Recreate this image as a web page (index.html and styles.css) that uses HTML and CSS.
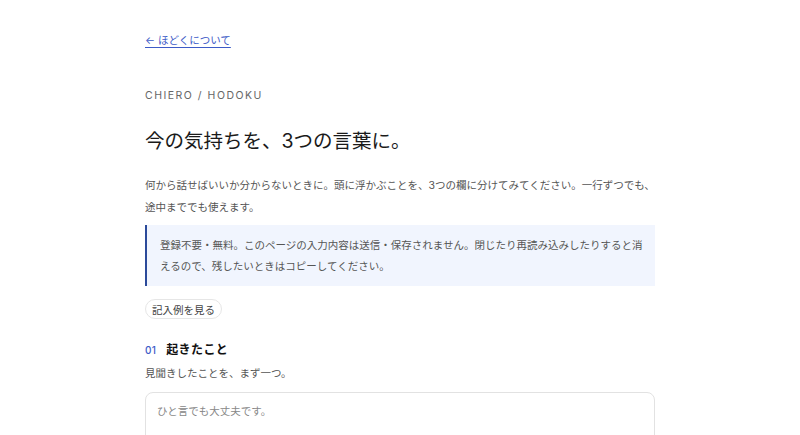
FILE: index.html
```html
<!DOCTYPE html>
<html lang="ja">
<head>
<meta charset="utf-8">
<title>今の気持ちを、3つの言葉に。</title>
<link rel="stylesheet" href="styles.css">
</head>
<body>
<main class="page">
  <a class="back" href="#">← ほどくについて</a>
  <p class="eyebrow">CHIERO / HODOKU</p>
  <h1 class="title">今の気持ちを、3つの言葉に。</h1>
  <p class="lead">何から話せばいいか分からないときに。頭に浮かぶことを、3つの欄に分けてみてください。一行ずつでも、途中まででも使えます。</p>
  <div class="notice">登録不要・無料。このページの入力内容は送信・保存されません。閉じたり再読み込みしたりすると消えるので、残したいときはコピーしてください。</div>
  <button class="example" type="button">記入例を見る</button>
  <section class="field">
    <h2 class="field-title"><span class="num">01</span>起きたこと</h2>
    <p class="field-hint">見聞きしたことを、まず一つ。</p>
    <textarea class="field-input" placeholder="ひと言でも大丈夫です。"></textarea>
  </section>
</main>
</body>
</html>
```
FILE: styles.css
```css
html, body {
  margin: 0;
  padding: 0;
  background: #ffffff;
}
body {
  font-family: "Inter", "Noto Sans CJK JP", sans-serif;
  color: #333;
}
.page {
  width: 510px;
  margin-left: 145px;
  padding-top: 33px;
  display: flex;
  flex-direction: column;
  align-items: flex-start;
}
.back {
  font-size: 10.5px;
  line-height: 16px;
  color: #3d5bc7;
  text-decoration: underline;
  text-underline-offset: 3px;
  text-decoration-thickness: 1px;
}
.eyebrow {
  margin: 39px 0 0;
  font-size: 10.5px;
  line-height: 16px;
  letter-spacing: 1.5px;
  color: #666;
}
.title {
  margin: 23px 0 0;
  font-size: 19.5px;
  line-height: 28px;
  font-weight: 400;
  color: #1a1a1a;
}
.lead {
  margin: 20px 0 0;
  font-size: 10.5px;
  line-height: 22px;
  color: #555;
}
.notice {
  box-sizing: border-box;
  width: 100%;
  margin-top: 6px;
  padding: 9.5px 8px 9.5px 13px;
  border-left: 2px solid #2b4a9a;
  background: #f1f5fe;
  font-size: 10.5px;
  line-height: 21px;
  color: #555;
  line-break: anywhere;
}
.example {
  margin-top: 13px;
  height: 20px;
  padding: 0 6px;
  border: 1px solid #e6e6e6;
  border-radius: 10px;
  background: #fff;
  font-family: inherit;
  font-size: 10.5px;
  color: #444;
}
.field {
  width: 100%;
  margin-top: 22px;
}
.field-title {
  margin: 0;
  font-size: 12px;
  line-height: 18px;
  font-weight: 700;
  color: #111;
  letter-spacing: 0.4px;
}
.num {
  font-size: 10px;
  font-weight: 500;
  color: #3d5bc7;
  margin-right: 10px;
  letter-spacing: 0.3px;
}
.field-hint {
  margin: 6px 0 0;
  font-size: 10.5px;
  line-height: 18px;
  color: #555;
}
.field-input {
  display: block;
  box-sizing: border-box;
  width: 100%;
  height: 90px;
  margin-top: 9px;
  padding: 10px 11px;
  border: 1px solid #e2e2e2;
  border-radius: 8px;
  font-family: inherit;
  font-size: 10.5px;
  line-height: 18px;
  resize: none;
}
.field-input::placeholder {
  color: #888;
}
```
